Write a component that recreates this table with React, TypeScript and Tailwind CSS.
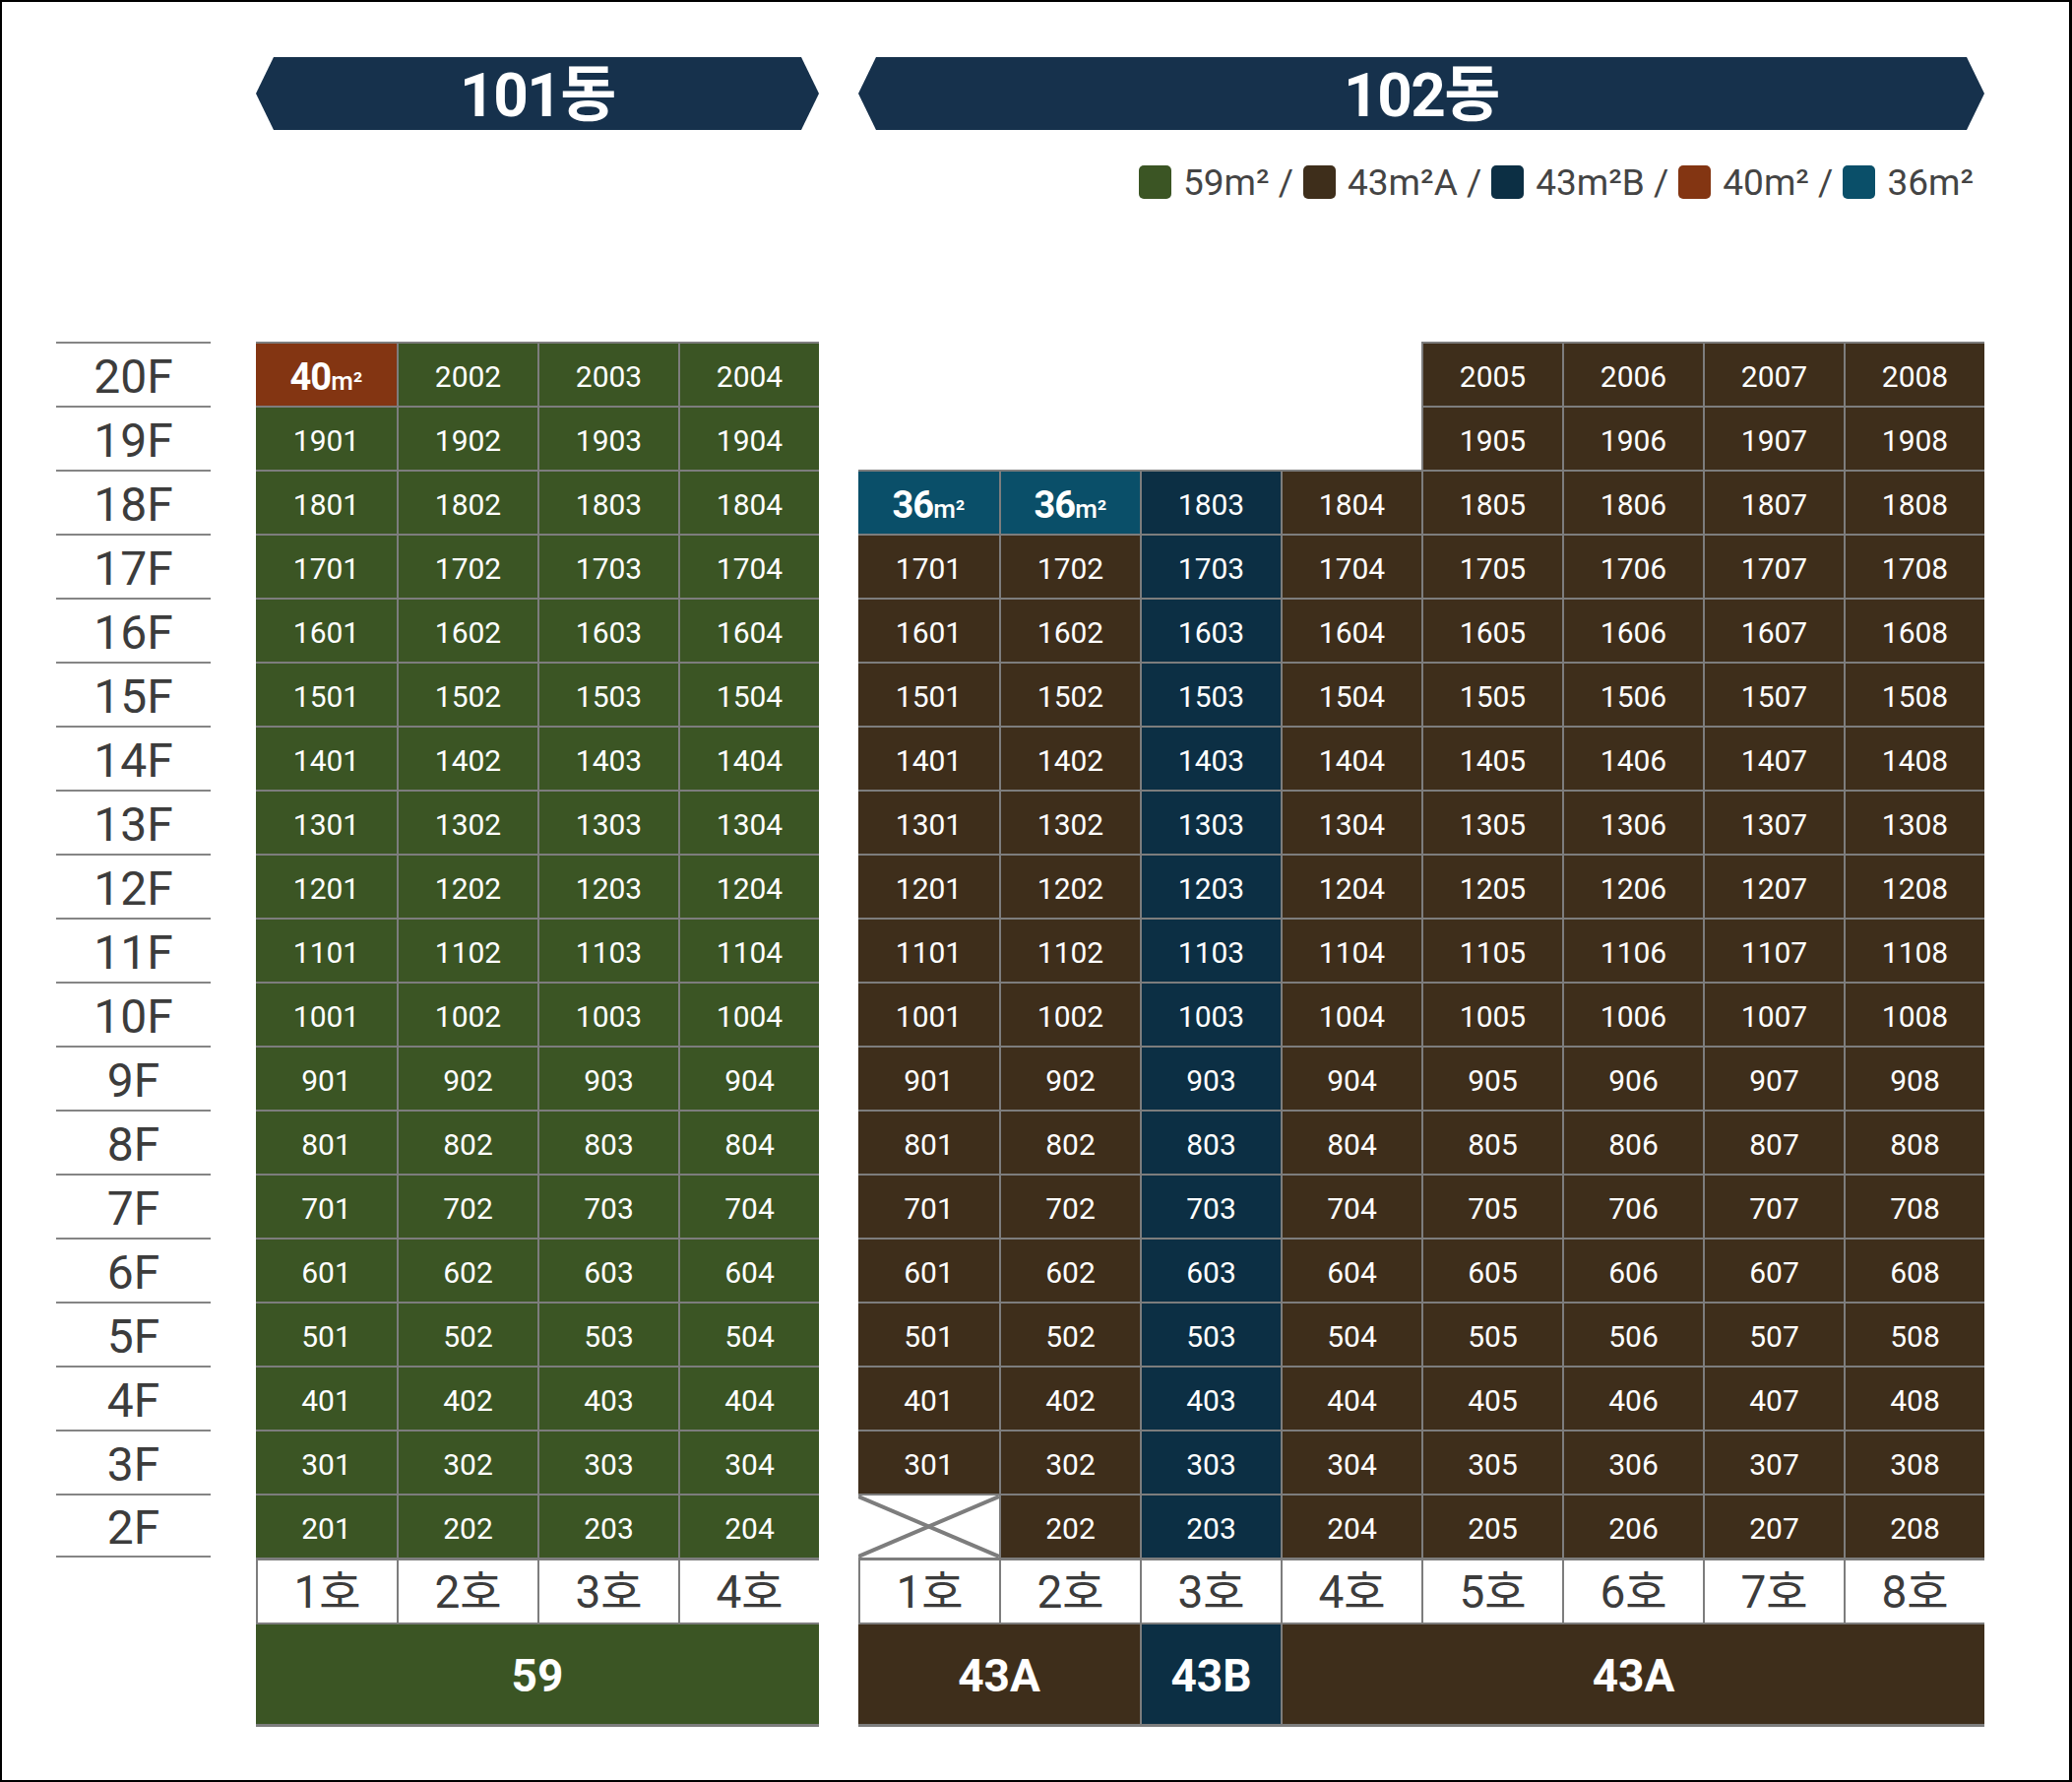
import React from "react";

const GREEN = "bg-[#3b5524]";
const BROWN = "bg-[#3e2e1b]";
const NAVY = "bg-[#0c2f44]";
const TEAL = "bg-[#0a4f69]";
const ORANGE = "bg-[#833512]";

type Cell =
  | { kind: "empty" }
  | { kind: "x" }
  | { kind: "num"; bg: string; text: string }
  | { kind: "area"; bg: string; text: string };

const floors = Array.from({ length: 19 }, (_, i) => 20 - i);
const pad = (n: number) => (n < 10 ? "0" + n : "" + n);

function cells101(f: number): Cell[] {
  return [1, 2, 3, 4].map((c) => {
    if (f === 20 && c === 1) return { kind: "area", bg: ORANGE, text: "40" } as Cell;
    return { kind: "num", bg: GREEN, text: `${f}${pad(c)}` } as Cell;
  });
}

function cells102(f: number): Cell[] {
  return [1, 2, 3, 4, 5, 6, 7, 8].map((c) => {
    if (f >= 19 && c <= 4) return { kind: "empty" } as Cell;
    if (f === 18 && c <= 2) return { kind: "area", bg: TEAL, text: "36" } as Cell;
    if (f === 2 && c === 1) return { kind: "x" } as Cell;
    if (c === 3) return { kind: "num", bg: NAVY, text: `${f}${pad(c)}` } as Cell;
    return { kind: "num", bg: BROWN, text: `${f}${pad(c)}` } as Cell;
  });
}

function GridCell({ cell, first }: { cell: Cell; first: boolean }) {
  if (cell.kind === "empty") return <div className="w-[143px] h-[65px] bg-white" />;
  const border = `border-t-2 border-[#7d7d7d] ${first ? "" : "border-l-2"}`;
  if (cell.kind === "x") {
    return (
      <div className={`w-[143px] h-[65px] bg-white ${border} box-border`}>
        <svg width="100%" height="100%" viewBox="0 0 143 63" preserveAspectRatio="none" className="block">
          <line x1="0" y1="1" x2="143" y2="62" stroke="#7d7d7d" strokeWidth="4" />
          <line x1="0" y1="62" x2="143" y2="1" stroke="#7d7d7d" strokeWidth="4" />
        </svg>
      </div>
    );
  }
  return (
    <div
      className={`w-[143px] h-[65px] ${cell.bg} ${border} box-border flex items-center justify-center text-white pt-[4px]`}
    >
      {cell.kind === "num" ? (
        <span className="text-[30px] leading-none">{cell.text}</span>
      ) : (
        <span className="flex items-baseline leading-none">
          <span className="text-[38px] font-bold tracking-[-1px]">{cell.text}</span>
          <span className="text-[26px] font-medium">m²</span>
        </span>
      )}
    </div>
  );
}

function Banner({ label }: { label: string }) {
  return (
    <div className="h-[74px] bg-[#16314c] flex items-center justify-center [clip-path:polygon(18px_0,calc(100%_-_18px)_0,100%_50%,calc(100%_-_18px)_100%,18px_100%,0_50%)]">
      <span className="text-white font-bold text-[62px] leading-none tracking-[-1.5px] mt-[3px]">{label}</span>
    </div>
  );
}

const legend = [
  { c: GREEN, t: "59m² /" },
  { c: BROWN, t: "43m²A /" },
  { c: NAVY, t: "43m²B /" },
  { c: ORANGE, t: "40m² /" },
  { c: TEAL, t: "36m²" },
];

export default function App() {
  return (
    <div
      className="w-[2105px] h-[1810px] bg-white border-t-2 border-l-2 border-b-2 border-r-[3px] border-black box-border"
      style={{ fontFamily: "Roboto, 'Noto Sans CJK KR', sans-serif" }}
    >
      <div className="flex pl-[55px] pt-[56px]">
        {/* floor labels */}
        <div className="w-[157px] mt-[289px]">
          {floors.map((f, i) => (
            <div
              key={f}
              className={`h-[65px] border-t-2 border-[#858585] ${i === floors.length - 1 ? "border-b-2" : ""} flex items-center justify-center text-[48px] leading-none text-[#3c3c3c] pt-[4px]`}
            >
              {f}F
            </div>
          ))}
        </div>

        {/* 101 */}
        <div className="ml-[46px] w-[572px]">
          <Banner label="101동" />
          <div className="h-[215px]" />
          {floors.map((f) => (
            <div key={f} className="flex">
              {cells101(f).map((c, i) => (
                <GridCell key={i} cell={c} first={i === 0} />
              ))}
            </div>
          ))}
          <div className="flex border-t-[3px] border-[#7d7d7d]">
            {[1, 2, 3, 4].map((n) => (
              <div
                key={n}
                className={`w-[143px] h-[63px] bg-white border-l-2 border-[#7d7d7d] flex items-center justify-center text-[46px] leading-none text-[#3c3c3c]`}
              >
                {n}호
              </div>
            ))}
          </div>
          <div className={`h-[106px] ${GREEN} border-t-2 border-b-[3px] border-[#7d7d7d] flex items-center justify-center text-white font-bold text-[46px] leading-none pt-[2px]`}>
            59
          </div>
        </div>

        {/* 102 */}
        <div className="ml-[40px] w-[1144px]">
          <Banner label="102동" />
          <div className="h-[215px] pt-[36px] flex justify-end pr-[11px]">
            <div className="flex items-center h-[34px] text-[37px] leading-none text-[#444444] gap-[10px]">
              {legend.map((l, i) => (
                <div key={i} className="flex items-center gap-[12px]">
                  <span className={`w-[33px] h-[34px] rounded-[5px] ${l.c}`} />
                  <span>{l.t}</span>
                </div>
              ))}
            </div>
          </div>
          {floors.map((f) => (
            <div key={f} className="flex">
              {cells102(f).map((c, i) => (
                <GridCell key={i} cell={c} first={i === 0} />
              ))}
            </div>
          ))}
          <div className="flex border-t-[3px] border-[#7d7d7d]">
            {[1, 2, 3, 4, 5, 6, 7, 8].map((n) => (
              <div
                key={n}
                className={`w-[143px] h-[63px] bg-white border-l-2 border-[#7d7d7d] flex items-center justify-center text-[46px] leading-none text-[#3c3c3c]`}
              >
                {n}호
              </div>
            ))}
          </div>
          <div className="flex h-[106px] border-t-2 border-b-[3px] border-[#7d7d7d] text-white font-bold text-[46px] leading-none">
            <div className={`w-[286px] ${BROWN} flex items-center justify-center pt-[2px]`}>43A</div>
            <div className={`w-[143px] ${NAVY} border-l-2 border-[#7d7d7d] flex items-center justify-center pt-[2px]`}>43B</div>
            <div className={`flex-1 ${BROWN} border-l-2 border-[#7d7d7d] flex items-center justify-center pt-[2px]`}>43A</div>
          </div>
        </div>
      </div>
    </div>
  );
}
